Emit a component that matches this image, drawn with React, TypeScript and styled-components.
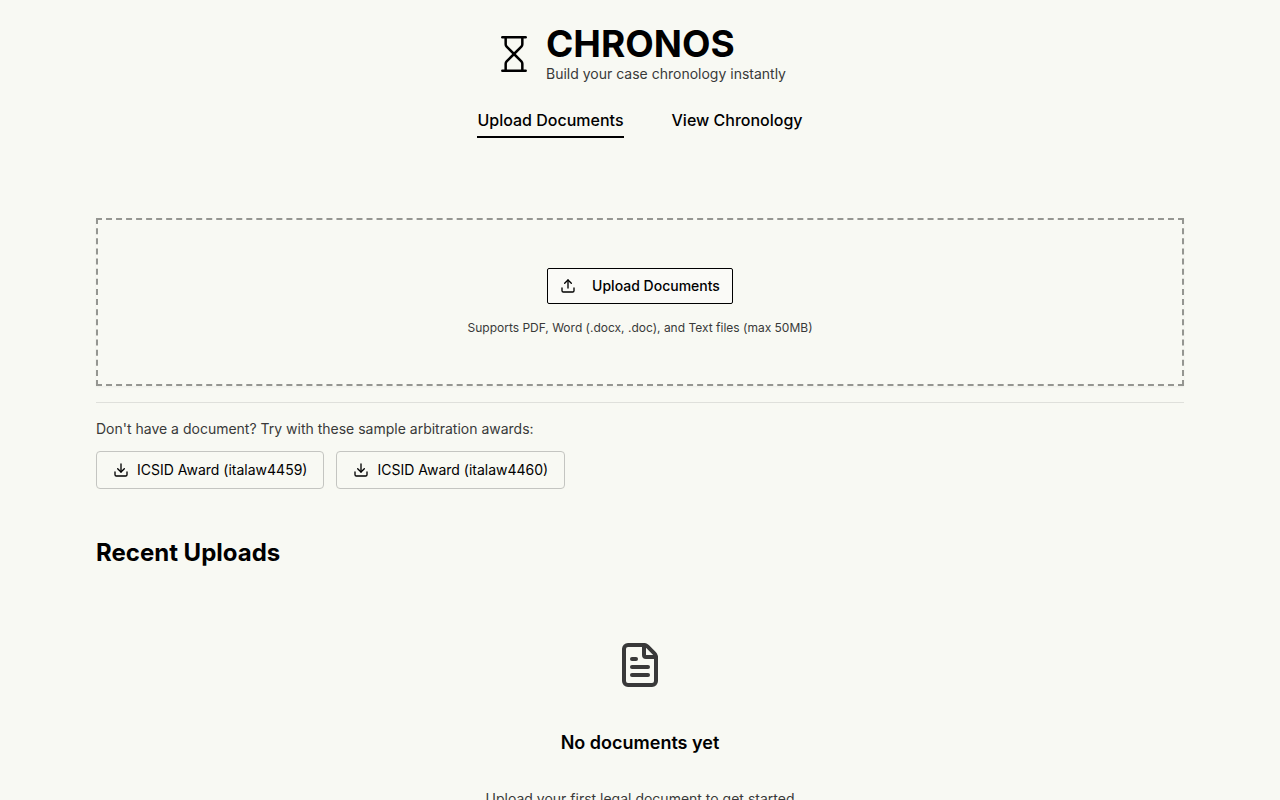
import React from "react";
import styled, { createGlobalStyle } from "styled-components";
import { Download, FileText, Hourglass, Upload } from "lucide-react";

const GlobalStyle = createGlobalStyle`
  *, *::before, *::after { box-sizing: border-box; }
  html { scrollbar-width: none; }
  body {
    margin: 0;
    background: #f8f9f3;
    color: #000;
    font-family: Inter, "Liberation Sans", sans-serif;
    font-size: 16px;
    line-height: 24px;
    -webkit-font-smoothing: antialiased;
  }
  h1, h2, h3, p { margin: 0; }
  button { font-family: inherit; color: inherit; cursor: pointer; }
`;

const Header = styled.header`
  display: flex;
  flex-direction: column;
  align-items: center;
  gap: 24px;
  padding: 24px 24px 0;
`;

const Brand = styled.div`
  display: flex;
  align-items: center;
  gap: 12px;
`;

const BrandName = styled.h1`
  font-size: 37px;
  line-height: 40px;
  font-weight: 700;
`;

const Tagline = styled.p`
  font-size: 14px;
  line-height: 20px;
  color: #393939;
`;

const Nav = styled.nav`
  display: flex;
  gap: 48px;
`;

const NavLink = styled.a<{ $active?: boolean }>`
  padding-bottom: 4px;
  border-bottom: 2px solid ${(p) => (p.$active ? "#000" : "transparent")};
  color: #000;
  font-weight: 500;
  text-decoration: none;
`;

const Main = styled.main`
  max-width: 1136px;
  margin: 0 auto;
  padding: 80px 24px 48px;
`;

const DropZone = styled.section`
  display: flex;
  flex-direction: column;
  align-items: center;
  gap: 16px;
  padding: 48px;
  border: 2px dashed #959691;
  box-shadow: 0 1px 2px rgba(0, 0, 0, 0.05);
`;

const UploadButton = styled.button`
  display: flex;
  align-items: center;
  gap: 16px;
  height: 36px;
  padding: 0 12px;
  border: 1px solid #000;
  border-radius: 2px;
  background: #fafaf7;
  font-size: 14px;
  line-height: 20px;
  font-weight: 500;
`;

const Hint = styled.p`
  font-size: 12px;
  line-height: 16px;
  color: #393939;
`;

const Samples = styled.section`
  margin-top: 16px;
  padding-top: 16px;
  border-top: 1px solid #dfe0db;
`;

const SampleRow = styled.div`
  display: flex;
  flex-wrap: wrap;
  gap: 12px;
  margin-top: 12px;
`;

const SampleButton = styled.button`
  display: flex;
  align-items: center;
  gap: 8px;
  height: 38px;
  padding: 0 16px;
  border: 1px solid #c4c5c1;
  border-radius: 4px;
  background: transparent;
  font-size: 14px;
  line-height: 20px;
`;

const SectionTitle = styled.h2`
  margin-top: 48px;
  font-size: 24px;
  line-height: 32px;
  font-weight: 700;
`;

const EmptyState = styled.section`
  display: flex;
  flex-direction: column;
  align-items: center;
  padding: 72px 0 48px;
  color: #393939;
  text-align: center;
`;

const EmptyTitle = styled.h3`
  margin: 40px 0 32px;
  color: #000;
  font-size: 18px;
  line-height: 28px;
  font-weight: 600;
`;

const samples = ["italaw4459", "italaw4460"];

export default function App() {
  return (
    <>
      <GlobalStyle />
      <Header>
        <Brand>
          <Hourglass size={40} strokeWidth={1.5} aria-hidden />
          <div>
            <BrandName>CHRONOS</BrandName>
            <Tagline>Build your case chronology instantly</Tagline>
          </div>
        </Brand>
        <Nav>
          <NavLink href="#upload" $active aria-current="page">Upload Documents</NavLink>
          <NavLink href="#chronology">View Chronology</NavLink>
        </Nav>
      </Header>
      <Main>
        <DropZone>
          <UploadButton type="button">
            <Upload size={16} aria-hidden />
            Upload Documents
          </UploadButton>
          <Hint>Supports PDF, Word (.docx, .doc), and Text files (max 50MB)</Hint>
        </DropZone>
        <Samples>
          <Tagline>Don't have a document? Try with these sample arbitration awards:</Tagline>
          <SampleRow>
            {samples.map((id) => (
              <SampleButton type="button" key={id}>
                <Download size={16} aria-hidden />
                {`ICSID Award (${id})`}
              </SampleButton>
            ))}
          </SampleRow>
        </Samples>
        <SectionTitle>Recent Uploads</SectionTitle>
        <EmptyState>
          <FileText size={48} aria-hidden />
          <EmptyTitle>No documents yet</EmptyTitle>
          <Tagline>Upload your first legal document to get started</Tagline>
        </EmptyState>
      </Main>
    </>
  );
}
